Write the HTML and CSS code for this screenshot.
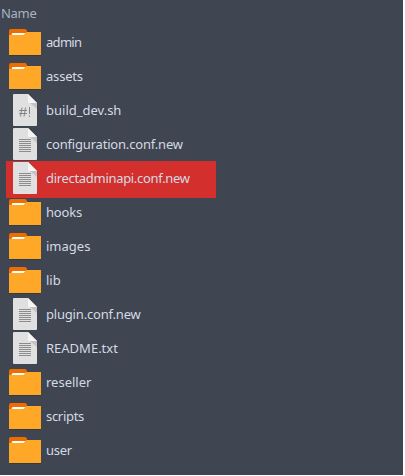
FILE: index.html
```
<!DOCTYPE html>
<html lang="en">
<head>
<meta charset="utf-8">
<title>Files</title>
<link rel="stylesheet" href="styles.css">
</head>
<body>
<svg class="defs" width="0" height="0" aria-hidden="true">
  <symbol id="folder" viewBox="0 0 32 32">
    <path d="M0 29h32v1H0z" fill="#353942"/>
    <path d="M0 5q0-2 2-2h14q1.600 0 2 2l1 5H0z" fill="#ef6c00"/>
    <path d="M0 9h14.500l3-3H32v23H0z" fill="#ffa726"/>
    <path d="M3.500 7h13l-2 2H2.500z" fill="#fff"/>
  </symbol>
  <symbol id="page" viewBox="0 0 24 32">
    <path d="M0 1q0-1 1-1h14l9 9v22q0 1-1 1H1q-1 0-1-1z" fill="#e0e0e0"/>
    <path d="M17 9h7v6z" fill="#c3c3c5"/>
    <path d="M15 0l9 9h-8q-1 0-1-1z" fill="#f5f5f5"/>
  </symbol>
  <symbol id="text" viewBox="0 0 24 32">
    <use href="#page"/>
    <path d="M6 11.500h12M6 13.500h12M6 15.500h12M6 17.500h12M6 19.500h12M6 21.500h12M6 23.500h12" stroke="#8c8c8c" stroke-width="1"/>
  </symbol>
  <symbol id="script" viewBox="0 0 24 32">
    <use href="#page"/>
    <path d="M9 13.500L7.500 22.500M12.500 13.500L11 22.500M6 16.500h8M6 19.500h8M16.500 13v7M16.500 21.500v1.500" fill="none" stroke="#858585" stroke-width="1"/>
  </symbol>
</svg>
<main class="files">
  <div class="header">Name</div>
  <ul class="list">
    <li class="row"><svg class="icon folder"><use href="#folder"/></svg><span class="tightest">admin</span></li>
    <li class="row"><svg class="icon folder"><use href="#folder"/></svg><span class="tight">assets</span></li>
    <li class="row"><svg class="icon file"><use href="#script"/></svg><span>build_dev.sh</span></li>
    <li class="row"><svg class="icon file"><use href="#text"/></svg><span class="tight">configuration.conf.new</span></li>
    <li class="row selected"><svg class="icon file"><use href="#text"/></svg><span class="tighter">directadminapi.conf.new</span></li>
    <li class="row"><svg class="icon folder"><use href="#folder"/></svg><span class="tight">hooks</span></li>
    <li class="row"><svg class="icon folder"><use href="#folder"/></svg><span>images</span></li>
    <li class="row"><svg class="icon folder"><use href="#folder"/></svg><span>lib</span></li>
    <li class="row"><svg class="icon file"><use href="#text"/></svg><span class="tight">plugin.conf.new</span></li>
    <li class="row"><svg class="icon file"><use href="#text"/></svg><span>README.txt</span></li>
    <li class="row"><svg class="icon folder"><use href="#folder"/></svg><span>reseller</span></li>
    <li class="row"><svg class="icon folder"><use href="#folder"/></svg><span class="tighter">scripts</span></li>
    <li class="row"><svg class="icon folder"><use href="#folder"/></svg><span class="tighter">user</span></li>
  </ul>
</main>
</body>
</html>
```
FILE: styles.css
```
* { box-sizing: border-box; }
body {
  margin: 0;
  background: #fff;
  font: 13px/18px "Noto Sans", sans-serif;
  color: #d3dae3;
}
.defs { display: block; }
.files {
  width: 403px;
  height: 475px;
  background: #404552;
  overflow: hidden;
}
.header {
  height: 25px;
  padding: 4px 0 0 1px;
  letter-spacing: -0.3px;
  color: #a9b2c0;
}
.list {
  margin: 0;
  padding: 0 0 0 6px;
  list-style: none;
}
.row {
  display: flex;
  align-items: center;
  width: 210px;
  height: 34px;
  padding-left: 3px;
}
.tight { letter-spacing: -0.19px; }
.tighter { letter-spacing: -0.31px; }
.tightest { letter-spacing: -0.7px; }
.icon {
  flex: none;
  width: 32px;
  height: 32px;
  margin-right: 5px;
}
.icon.file {
  width: 24px;
  margin: 0 9px 0 4px;
}
.selected {
  height: 37px;
  margin-bottom: -3px;
  padding-bottom: 3px;
  background: #d32f2c;
}
```
